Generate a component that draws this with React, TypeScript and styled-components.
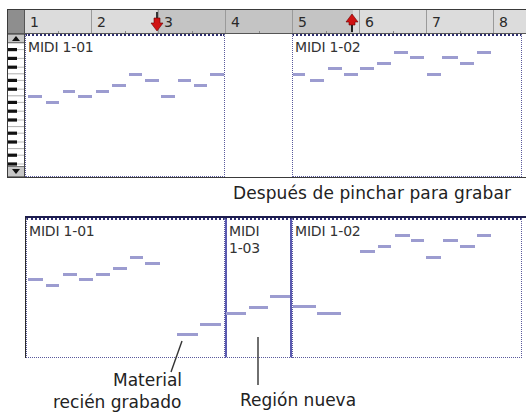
import React from 'react';
import styled, { createGlobalStyle } from 'styled-components';

const GlobalStyle = createGlobalStyle`
  html, body {
    margin: 0;
    padding: 0;
    background: #fff;
    overflow: hidden;
  }
  body {
    width: 526px;
    height: 412px;
    font-family: "DejaVu Sans", "Liberation Sans", sans-serif;
    color: #222;
  }
`;

const Page = styled.div`
  position: relative;
  width: 526px;
  height: 412px;
  padding-top: 9px;
  box-sizing: border-box;
`;

const EditWindow = styled.div`
  margin-left: 7px;
  border: 1px solid #3a3a3a;
  border-right: none;
  display: flex;
  flex-direction: column;
`;

const RulerRow = styled.div`
  display: flex;
  height: 23px;
  border-bottom: 1px solid #555;
`;

const Corner = styled.div`
  width: 16px;
  flex: none;
  background: #8e8e8e;
  border-right: 1px solid #555;
`;

const Ruler = styled.div`
  position: relative;
  flex: 1;
  display: flex;
  overflow: hidden;
  background: linear-gradient(to right, #dcdcdc 0 132px, #c4c4c4 132px 328px, #dcdcdc 328px);
`;

const BarCell = styled.div`
  width: 67px;
  flex: none;
  box-sizing: border-box;
  border-right: 1px solid #9a9a9a;
  padding: 5px 0 0 5px;
  font-size: 14px;
  line-height: 14px;
  color: #2a2a2a;
  background: linear-gradient(#8a8a8a, #8a8a8a) 33px 100% / 1px 2px no-repeat;
`;

const Marker = styled.div<{ $x: number }>`
  position: absolute;
  top: 2px;
  left: ${p => p.$x - 7}px;
  line-height: 0;
`;

const TrackRow = styled.div`
  display: flex;
  height: 143px;
`;

const Keyboard = styled.div`
  width: 16px;
  flex: none;
  display: flex;
  flex-direction: column;
  border-right: 1px solid #444;
  background: #fff;
`;

const ScrollButton = styled.div<{ $h: number }>`
  height: ${p => p.$h}px;
  flex: none;
  background: #c6c6c6;
  border-top: 1px solid #777;
  border-bottom: 1px solid #777;
  box-sizing: border-box;
  display: flex;
  align-items: center;
  justify-content: center;
`;

const Lane = styled.div`
  flex: 1;
  display: flex;
  padding-right: 4px;
`;

const Region = styled.div<{ $w?: number; $fresh?: boolean }>`
  position: relative;
  box-sizing: border-box;
  height: 100%;
  ${p => (p.$w ? `width: ${p.$w}px; flex: none;` : 'flex: 1;')}
  border: 1px dotted #5a5a9c;
  border-top: 2px dotted #2e2e70;
  ${p => p.$fresh && 'border-left: 2px solid #5a5ab0; border-right: 2px solid #5a5ab0;'}
`;

const Gap = styled.div<{ $w: number }>`
  width: ${p => p.$w}px;
  flex: none;
`;

const RegionName = styled.div`
  position: relative;
  padding: 3px 0 0 2px;
  font-size: 14px;
  line-height: 17px;
  letter-spacing: -0.2px;
  color: #333;
  white-space: pre-line;
  z-index: 1;
`;

const NoteLayer = styled.svg`
  position: absolute;
  left: -1px;
  top: -2px;
  overflow: visible;
`;

const Caption = styled.div`
  height: 38px;
  box-sizing: border-box;
  padding: 5px 15px 0 0;
  text-align: right;
  font-size: 17px;
  line-height: 20px;
  letter-spacing: 0.1px;
  color: #222;
`;

const Take = styled.div`
  margin-left: 25px;
  height: 142px;
  box-sizing: border-box;
  display: flex;
  border-top: 2px solid #1d1d4e;
  border-left: 1px solid #2a2a2a;
  padding-right: 4px;
`;

const Notes = styled.div`
  display: flex;
  font-size: 17px;
  line-height: 20px;
  color: #222;
`;

const Callout = styled.div<{ $left: number; $top: number; $w: number }>`
  margin-left: ${p => p.$left}px;
  margin-top: ${p => p.$top}px;
  width: ${p => p.$w}px;
  display: flex;
  flex-direction: column;
`;

const CalloutLine = styled.span<{ $indent?: number }>`
  padding-left: ${p => p.$indent ?? 0}px;
  margin-bottom: 2px;
  white-space: nowrap;
`;

const Leaders = styled.svg`
  position: absolute;
  left: 0;
  top: 0;
  pointer-events: none;
`;

type Note = [number, number, number];

const topFirst: Note[] = [
  [3, 62, 14], [21, 68, 13], [38, 57, 12], [53, 62, 14], [71, 57, 13], [87, 51, 14],
  [104, 40, 13], [120, 46, 14], [136, 62, 14], [153, 46, 13], [169, 51, 13], [185, 40, 14],
];
const topSecond: Note[] = [
  [1, 40, 12], [18, 46, 14], [36, 34, 14], [52, 40, 14], [68, 34, 14], [85, 29, 14],
  [102, 18, 14], [118, 23, 14], [135, 40, 14], [150, 23, 16], [168, 29, 14], [185, 18, 14],
];
const takeFirst: Note[] = [
  [2, 61, 15], [20, 67, 13], [37, 56, 14], [53, 61, 14], [70, 56, 14], [87, 50, 14],
  [104, 39, 13], [119, 45, 15], [151, 116, 21], [174, 106, 21],
];
const takeNew: Note[] = [[0, 95, 20], [23, 89, 19], [44, 78, 20]];
const takeSecond: Note[] = [
  [1, 88, 23], [25, 95, 24], [68, 33, 15], [86, 28, 13], [103, 17, 15], [119, 22, 13],
  [134, 39, 15], [151, 22, 15], [168, 28, 15], [185, 17, 14],
];

const NoteBars = ({ notes }: { notes: Note[] }) => (
  <NoteLayer width="10" height="10">
    {notes.map(([x, y, w], i) => (
      <rect key={i} x={x} y={y - 1} width={w} height={3} fill="#9c9cd0" />
    ))}
  </NoteLayer>
);

const KEYS_H = 123;
const SEMI = 4.4;
const BLACK = [1, 3, 5, 8, 10];

const Keys = () => {
  const rows = Math.ceil(KEYS_H / SEMI) + 1;
  const items: React.ReactNode[] = [];
  for (let r = 0; r < rows; r++) {
    const k = r % 12;
    const y = r * SEMI;
    if (BLACK.includes(k)) {
      items.push(<rect key={'b' + r} x={0} y={y + 0.6} width={9} height={3.2} fill="#111" />);
      items.push(<line key={'m' + r} x1={9} x2={16} y1={y + 2.2} y2={y + 2.2} stroke="#aaa" strokeWidth={0.8} />);
    }
    if (k === 7 || k === 0) {
      items.push(<line key={'w' + r} x1={0} x2={16} y1={y} y2={y} stroke="#999" strokeWidth={0.8} />);
    }
  }
  return (
    <svg width="16" height={KEYS_H} style={{ display: 'block' }}>
      {items}
    </svg>
  );
};

const Arrow = ({ up }: { up?: boolean }) => (
  <svg width="8" height="5" viewBox="0 0 8 5">
    <polygon points={up ? '4,0 8,5 0,5' : '0,0 8,0 4,5'} fill="#111" />
  </svg>
);

const PunchIn = () => (
  <svg width="14" height="20" viewBox="0 0 14 20">
    <rect x="6" y="0" width="2" height="7" fill="#333" />
    <polygon points="4,6 10,6 10,11 13,11 7,19 1,11 4,11" fill="#d01212" stroke="#6a0000" strokeWidth="0.6" />
  </svg>
);

const PunchOut = () => (
  <svg width="14" height="20" viewBox="0 0 14 20">
    <rect x="6" y="11" width="2" height="9" fill="#222" />
    <polygon points="7,2 13,10 10,10 10,13 4,13 4,10 1,10" fill="#d01212" stroke="#6a0000" strokeWidth="0.6" />
  </svg>
);

const bars = [1, 2, 3, 4, 5, 6, 7, 8];

export default function App() {
  return (
    <Page>
      <GlobalStyle />
      <EditWindow>
        <RulerRow>
          <Corner />
          <Ruler>
            {bars.map(b => (
              <BarCell key={b}>{b}</BarCell>
            ))}
            <Marker $x={132}>
              <PunchIn />
            </Marker>
            <Marker $x={327}>
              <PunchOut />
            </Marker>
          </Ruler>
        </RulerRow>
        <TrackRow>
          <Keyboard>
            <ScrollButton $h={9}>
              <Arrow up />
            </ScrollButton>
            <Keys />
            <ScrollButton $h={11}>
              <Arrow />
            </ScrollButton>
          </Keyboard>
          <Lane>
            <Region $w={200}>
              <RegionName>MIDI 1-01</RegionName>
              <NoteBars notes={topFirst} />
            </Region>
            <Gap $w={67} />
            <Region>
              <RegionName>MIDI 1-02</RegionName>
              <NoteBars notes={topSecond} />
            </Region>
          </Lane>
        </TrackRow>
      </EditWindow>

      <Caption>Después de pinchar para grabar</Caption>

      <Take>
        <Region $w={199}>
          <RegionName>MIDI 1-01</RegionName>
          <NoteBars notes={takeFirst} />
        </Region>
        <Region $w={67} $fresh>
          <RegionName>{'MIDI\n1-03'}</RegionName>
          <NoteBars notes={takeNew} />
        </Region>
        <Region>
          <RegionName>MIDI 1-02</RegionName>
          <NoteBars notes={takeSecond} />
        </Region>
      </Take>

      <Notes>
        <Callout $left={53} $top={12} $w={160}>
          <CalloutLine $indent={60}>Material</CalloutLine>
          <CalloutLine>recién grabado</CalloutLine>
        </Callout>
        <Callout $left={27} $top={32} $w={140}>
          <CalloutLine>Región nueva</CalloutLine>
        </Callout>
      </Notes>

      <Leaders width="526" height="412">
        <line x1="182" y1="341" x2="171" y2="372" stroke="#333" strokeWidth="1.4" />
        <line x1="258" y1="337" x2="258" y2="385" stroke="#333" strokeWidth="1.4" />
      </Leaders>
    </Page>
  );
}
